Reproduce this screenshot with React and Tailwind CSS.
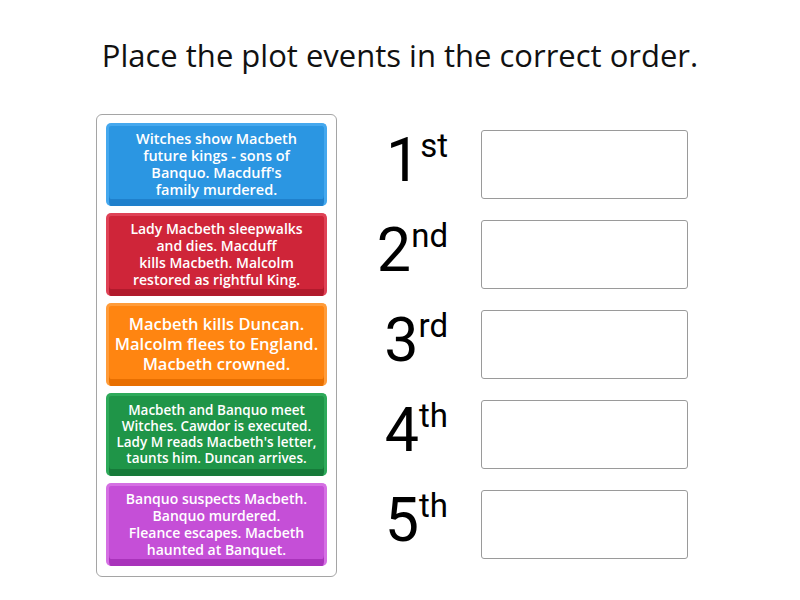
const CARDS = [
  {
    text: ["Witches show Macbeth", "future kings - sons of", "Banquo. Macduff's", "family murdered."],
    face: "bg-[#2b96e2]",
    rim: "border-[#45a8ee]",
    shade: "shadow-[inset_0_-7px_0_#1f80cc]",
    size: "text-[14.5px] leading-[17px]",
  },
  {
    text: ["Lady Macbeth sleepwalks", "and dies. Macduff", "kills Macbeth. Malcolm", "restored as rightful King."],
    face: "bg-[#cf2539]",
    rim: "border-[#df4256]",
    shade: "shadow-[inset_0_-7px_0_#b11a2c]",
    size: "text-[14px] leading-[17px]",
  },
  {
    text: ["Macbeth kills Duncan.", "Malcolm flees to England.", "Macbeth crowned."],
    face: "bg-[#ff8511]",
    rim: "border-[#ff9c3a]",
    shade: "shadow-[inset_0_-7px_0_#e86f00]",
    size: "text-[16.5px] leading-[20px]",
  },
  {
    text: ["Macbeth and Banquo meet", "Witches. Cawdor is executed.", "Lady M reads Macbeth's letter,", "taunts him. Duncan arrives."],
    face: "bg-[#1f9548]",
    rim: "border-[#2eaa5a]",
    shade: "shadow-[inset_0_-7px_0_#167a39]",
    size: "text-[13.5px] leading-[16px]",
  },
  {
    text: ["Banquo suspects Macbeth.", "Banquo murdered.", "Fleance escapes. Macbeth", "haunted at Banquet."],
    face: "bg-[#c54fd7]",
    rim: "border-[#d570e3]",
    shade: "shadow-[inset_0_-7px_0_#a933bb]",
    size: "text-[14px] leading-[17px]",
  },
];

const ORDINALS = [
  ["1", "st"],
  ["2", "nd"],
  ["3", "rd"],
  ["4", "th"],
  ["5", "th"],
];

function Card({ card }) {
  return (
    <div
      className={`h-[83px] rounded-[5px] border-[3px] border-b-0 ${card.face} ${card.rim} ${card.shade} flex items-center justify-center pb-[5px] text-white font-semibold text-center ${card.size}`}
    >
      <div>
        {card.text.map((line) => (
          <div key={line}>{line}</div>
        ))}
      </div>
    </div>
  );
}

export default function App() {
  return (
    <div className="w-[800px] h-[600px] bg-white font-['Open_Sans',sans-serif] text-black">
      {/* Title */}
      <h1 className="pt-[34px] text-center text-[31px] leading-[42px] font-normal text-[#111]">
        Place the plot events in the correct order.
      </h1>

      <div className="mt-[38px] flex pl-[96px]">
        {/* Cards panel */}
        <div className="w-[241px] h-[463px] rounded-[6px] border border-[#a5a5a5] px-[9px] pt-[8px] flex flex-col gap-[7px]">
          {CARDS.map((card, i) => (
            <Card key={i} card={card} />
          ))}
        </div>

        {/* Ordinals + drop boxes */}
        <div className="pt-[16px] flex flex-col gap-[21px]">
          {ORDINALS.map(([n, sup], i) => (
            <div key={i} className="flex items-center h-[69px]">
              <div className="w-[111px] flex justify-end font-['Roboto',sans-serif] font-normal text-black">
                <span className="text-[61px] leading-[61px] -mt-[8px]">{n}</span>
                <span className="text-[33px] leading-[33px] -mt-[9px] self-start">{sup}</span>
              </div>
              <div className="ml-[33px] w-[207px] h-[69px] rounded-[3px] border border-[#9a9a9a] bg-white" />
            </div>
          ))}
        </div>
      </div>
    </div>
  );
}
